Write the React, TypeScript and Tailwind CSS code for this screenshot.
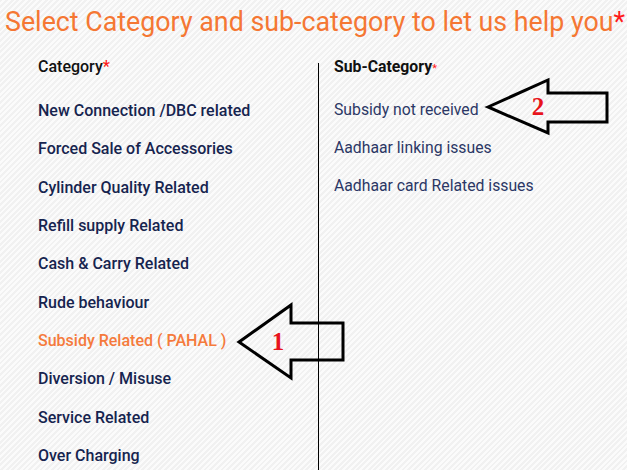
import React from 'react'

const categories = [
  'New Connection /DBC related',
  'Forced Sale of Accessories',
  'Cylinder Quality Related',
  'Refill supply Related',
  'Cash & Carry Related',
  'Rude behaviour',
  'Subsidy Related ( PAHAL )',
  'Diversion / Misuse',
  'Service Related',
  'Over Charging',
]

const subCategories = ['Subsidy not received', 'Aadhaar linking issues', 'Aadhaar card Related issues']

const ACTIVE = 'Subsidy Related ( PAHAL )'

function Arrows() {
  return (
    <svg className="absolute inset-0 pointer-events-none" width="627" height="470" viewBox="0 0 627 470">
      <polygon
        points="239,342 291,305 291,323 343,323 343,360 291,360 291,378"
        fill="none"
        stroke="#000"
        strokeWidth="3"
        strokeLinejoin="miter"
      />
      <text x="278" y="350" textAnchor="middle" fill="#e8141c" fontFamily="'Liberation Serif', serif" fontWeight="bold" fontSize="25">
        1
      </text>
      <polygon
        points="488,107 548,80 548,93 607,93 607,122 548,122 548,133"
        fill="none"
        stroke="#000"
        strokeWidth="3"
        strokeLinejoin="miter"
      />
      <text x="538" y="115" textAnchor="middle" fill="#e8141c" fontFamily="'Liberation Serif', serif" fontWeight="bold" fontSize="25">
        2
      </text>
    </svg>
  )
}

export default function App() {
  return (
    <div className="relative w-[627px] h-[470px] overflow-hidden font-['Roboto',sans-serif] bg-[repeating-linear-gradient(135deg,#f1f1f1_0px,#f1f1f1_2px,#fbfbfb_2px,#fbfbfb_4px)]">
      <h1 className="h-[45px] pl-[5px] pt-[4px] text-[26.8px] leading-[36px] text-[#f57733] whitespace-nowrap">
        Select Category and sub-category to let us help you<span className="text-[#ff1a1a]">*</span>
      </h1>

      <div className="flex">
        <div className="w-[319px] mt-[18px] border-r-[1.5px] border-black pl-[38px] h-[420px]">
          <div className="-mt-[8px] h-[24px] leading-[24px] text-[16px] font-medium text-[#111]">
            Category<span className="text-[#ff1a1a]">*</span>
          </div>
          <ul className="mt-[13px]">
            {categories.map((c) => (
              <li
                key={c}
                className={`h-[38.33px] leading-[38px] text-[16px] font-medium whitespace-nowrap ${
                  c === ACTIVE ? 'text-[#f57a3c]' : 'text-[#16244f]'
                }`}
              >
                {c}
              </li>
            ))}
          </ul>
        </div>

        <div className="pl-[15px] pt-[10px]">
          <div className="h-[24px] leading-[24px] text-[15.8px] font-bold text-[#111]">
            Sub-Category<span className="text-[#ff1a1a] text-[11px] font-normal">*</span>
          </div>
          <ul className="mt-[12px]">
            {subCategories.map((s) => (
              <li key={s} className="h-[38px] leading-[38px] text-[15.75px] text-[#2b3765] whitespace-nowrap">
                {s}
              </li>
            ))}
          </ul>
        </div>
      </div>

      <Arrows />
    </div>
  )
}
